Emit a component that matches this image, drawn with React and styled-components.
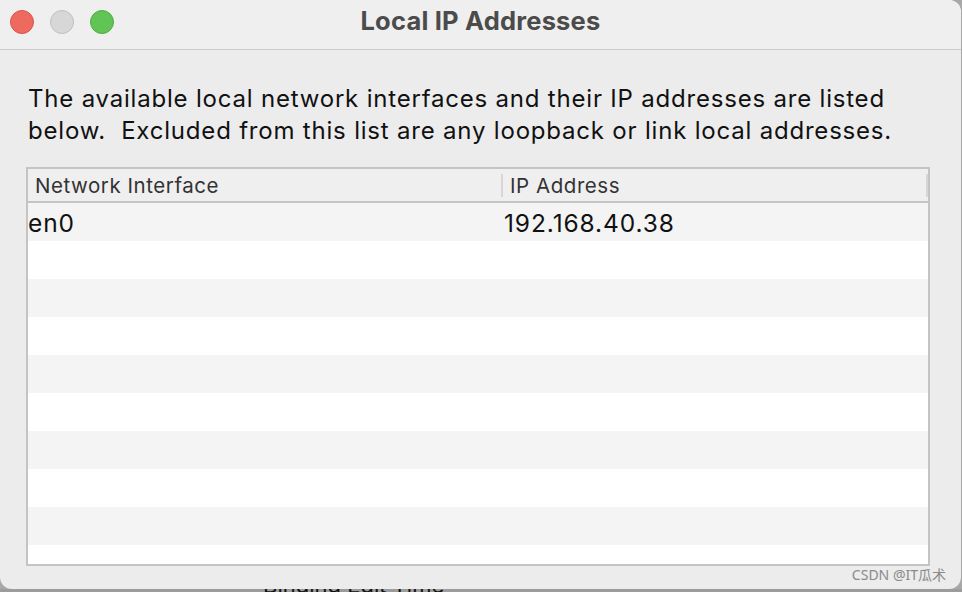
import React from "react";
import styled, { createGlobalStyle } from "styled-components";

const Global = createGlobalStyle`
  html, body { margin: 0; padding: 0; background: #ffffff; }
  body { width: 962px; height: 592px; overflow: hidden; font-family: Inter, "Noto Sans", sans-serif; }
  #root { width: 962px; height: 592px; }
`;

const Stage = styled.div`
  position: relative;
  width: 962px;
  height: 592px;
  display: flex;
  flex-direction: column;
  background: #a8a8a8;
`;

const Window = styled.div`
  width: 961px;
  height: 589px;
  flex: none;
  background: #ececec;
  border-radius: 0 12px 12px 12px;
  display: flex;
  flex-direction: column;
  overflow: hidden;
  position: relative;
  z-index: 1;
`;

const Behind = styled.div`
  flex: 1;
  background: #9c9c9c;
  position: relative;
  overflow: hidden;
`;

const BehindText = styled.span`
  position: absolute;
  left: 263px;
  top: -15px;
  font-family: Inter, sans-serif;
  font-size: 22px;
  line-height: 22px;
  color: #111;
`;

const TitleBar = styled.div`
  height: 50px;
  flex: none;
  display: flex;
  align-items: center;
  position: relative;
  background: #efefef;
  border-bottom: 1px solid #cbcbcb;
  box-sizing: border-box;
`;

const Lights = styled.div`
  display: flex;
  gap: 16px;
  padding-left: 10px;
  margin-top: -6px;
`;

const Light = styled.span`
  width: 24px;
  height: 24px;
  border-radius: 50%;
  box-sizing: border-box;
  background: ${(p) => p.$bg};
  border: 1px solid ${(p) => p.$bd};
`;

const Title = styled.div`
  position: absolute;
  left: 0;
  right: 0;
  top: 5px;
  text-align: center;
  font-family: Inter, sans-serif;
  font-weight: 700;
  font-size: 25.5px;
  line-height: 32px;
  color: #4b4b4b;
  letter-spacing: 0.2px;
`;

const Content = styled.div`
  flex: 1;
  display: flex;
  flex-direction: column;
  padding: 33px 0 0 26px;
`;

const Intro = styled.p`
  margin: 0 0 20px 2px;
  font-family: Inter, sans-serif;
  font-size: 24px;
  line-height: 32px;
  color: #111;
  letter-spacing: 0.8px;
  white-space: nowrap;
`;

const Table = styled.div`
  width: 904px;
  height: 399px;
  box-sizing: border-box;
  border: 2px solid #c4c4c4;
  display: flex;
  flex-direction: column;
  background: #fff;
`;

const Header = styled.div`
  height: 34px;
  flex: none;
  box-sizing: border-box;
  border-bottom: 2px solid #c4c4c4;
  background: #efefef;
  display: grid;
  grid-template-columns: 475px 1fr;
  align-items: center;
`;

const HeadCell = styled.div`
  height: 100%;
  display: flex;
  align-items: center;
  position: relative;
  padding-left: ${(p) => p.$pad}px;
  padding-top: 1px;
  box-sizing: border-box;
  font-family: Inter, sans-serif;
  font-size: 20.5px;
  color: #333;
  letter-spacing: 0.55px;
  &::after {
    content: "";
    position: absolute;
    right: 0;
    top: 5px;
    bottom: 4px;
    width: 2px;
    background: #d6d6d6;
  }
`;

const Body = styled.div`
  flex: 1;
  overflow: hidden;
`;

const Row = styled.div`
  height: 38px;
  display: grid;
  grid-template-columns: 476px 1fr;
  align-items: center;
  background: ${(p) => (p.$alt ? "#f4f4f4" : "#ffffff")};
`;

const Cell = styled.div`
  font-family: Inter, sans-serif;
  font-size: 24.5px;
  line-height: 30px;
  color: #111;
  letter-spacing: 0.9px;
  padding-top: 2px;
`;

const Watermark = styled.span`
  position: absolute;
  right: 15px;
  bottom: 5px;
  font-family: "Noto Sans", "Noto Sans CJK SC", sans-serif;
  font-size: 14px;
  color: #8a8a8a;
  z-index: 2;
`;

const rows = [
  ["en0", "192.168.40.38"],
  ...Array.from({ length: 9 }, () => ["", ""]),
];

export default function App() {
  return (
    <>
      <Global />
      <Stage>
        <Window>
          <TitleBar>
            <Lights>
              <Light $bg="#ee6a5e" $bd="#d9544a" />
              <Light $bg="#d7d7d7" $bd="#c0c0c0" />
              <Light $bg="#61c454" $bd="#4fad43" />
            </Lights>
            <Title>Local IP Addresses</Title>
          </TitleBar>
          <Content>
            <Intro>
              The available local network interfaces and their IP addresses are listed
              <br />
              below.&nbsp; Excluded from this list are any loopback or link local addresses.
            </Intro>
            <Table>
              <Header>
                <HeadCell $pad={7}>Network Interface</HeadCell>
                <HeadCell $pad={7}>IP Address</HeadCell>
              </Header>
              <Body>
                {rows.map((r, i) => (
                  <Row key={i} $alt={i % 2 === 0}>
                    <Cell>{r[0]}</Cell>
                    <Cell>{r[1]}</Cell>
                  </Row>
                ))}
              </Body>
            </Table>
          </Content>
          <Watermark>CSDN @IT瓜术</Watermark>
        </Window>
        <Behind>
          <BehindText>Binding Edit Time</BehindText>
        </Behind>
      </Stage>
    </>
  );
}
